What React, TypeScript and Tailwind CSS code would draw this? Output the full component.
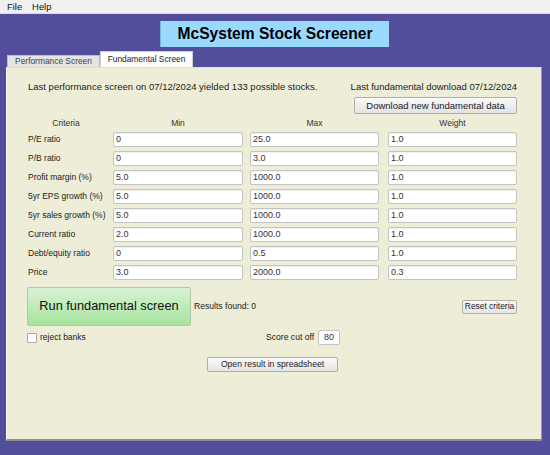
import React from "react";

const rows: [string, string, string, string][] = [
  ["P/E ratio", "0", "25.0", "1.0"],
  ["P/B ratio", "0", "3.0", "1.0"],
  ["Profit margin (%)", "5.0", "1000.0", "1.0"],
  ["5yr EPS growth (%)", "5.0", "1000.0", "1.0"],
  ["5yr sales growth (%)", "5.0", "1000.0", "1.0"],
  ["Current ratio", "2.0", "1000.0", "1.0"],
  ["Debt/equity ratio", "0", "0.5", "1.0"],
  ["Price", "3.0", "2000.0", "0.3"],
];

function Field({ value, className }: { value: string; className: string }) {
  return (
    <div
      className={`h-[15px] flex items-center bg-white border border-[#c3c3c3] rounded-[2px] pl-[2px] text-[9px] leading-none text-[#333] shadow-[inset_0_1px_1px_rgba(0,0,0,0.06)] ${className}`}
    >
      {value}
    </div>
  );
}

export default function App() {
  return (
    <div className="w-[550px] h-[455px] flex flex-col font-['Liberation_Sans',Arial,sans-serif] text-[#222] overflow-hidden">
      {/* menu bar */}
      <div className="h-[14px] bg-[#f0f0f0] border-b border-[#dcdcdc] flex items-center gap-[10px] pl-[7px] text-[9.4px] leading-none text-[#111]">
        <span>File</span>
        <span>Help</span>
      </div>

      <div className="flex-1 bg-[#524e9c] flex flex-col">
        {/* title */}
        <div className="mt-[7px] ml-[160px] w-[229px] h-[26px] bg-[#99d9fe] border-l border-[#7ab4d6] flex items-center justify-center">
          <span className="text-[15.6px] font-bold leading-none text-black">McSystem Stock Screener</span>
        </div>

        {/* tabs */}
        <div className="mt-[4px] ml-[6px] h-[16px] flex items-end">
          <div className="ml-[1px] w-[93px] h-[12px] bg-[#e4e4e4] border border-b-0 border-[#bcbcbc] flex items-center justify-center text-[8.4px] leading-none text-[#444]">
            Performance Screen
          </div>
          <div className="w-[93px] h-[16px] bg-white border border-b-0 border-[#cfcfcf] flex items-center justify-center text-[8.4px] leading-none text-[#222]">
            Fundamental Screen
          </div>
        </div>

        {/* panel */}
        <div className="ml-[6px] w-[536px] h-[374px] bg-[#eeedd7] border-t border-t-[#dedede] border-l border-l-[#f8f8f8] border-r border-r-[#9a9a9a] border-b-2 border-b-[#8d8d8d] pt-[13px] pl-[21px] pr-[24px] flex flex-col">
          <div className="h-[12px] flex items-center justify-between text-[9.5px] leading-none text-[#222]">
            <span>Last performance screen on 07/12/2024 yielded 133 possible stocks.</span>
            <span>Last fundamental download 07/12/2024</span>
          </div>

          <div className="mt-[4px] flex justify-end">
            <div className="w-[163px] h-[17px] bg-gradient-to-b from-[#fafafa] to-[#e3e3e3] border border-[#adadad] rounded-[2px] flex items-center justify-center text-[9.5px] leading-none text-[#222]">
              Download new fundamental data
            </div>
          </div>

          {/* header */}
          <div className="mt-[3px] h-[12px] flex items-center text-[8.5px] leading-none text-[#333]">
            <div className="w-[76px] text-center">Criteria</div>
            <div className="ml-[9px] w-[130px] text-center">Min</div>
            <div className="ml-[7px] w-[129px] text-center">Max</div>
            <div className="ml-[9px] w-[129px] text-center">Weight</div>
          </div>

          <div className="mt-[3px] flex flex-col gap-[4px]">
            {rows.map(([label, min, max, w]) => (
              <div key={label} className="flex items-center h-[15px]">
                <div className="w-[85px] text-[8.5px] leading-none text-[#222]">{label}</div>
                <Field value={min} className="w-[130px]" />
                <Field value={max} className="ml-[7px] w-[129px]" />
                <Field value={w} className="ml-[9px] w-[129px]" />
              </div>
            ))}
          </div>

          {/* run row */}
          <div className="mt-[7px] flex items-center">
            <div className="-ml-px w-[164px] h-[39px] bg-gradient-to-b from-[#d8f2d4] to-[#a6e39d] border border-[#b4c4ae] rounded-[2px] flex items-center justify-center text-[12.8px] leading-none text-[#111]">
              Run fundamental screen
            </div>
            <span className="ml-[3px] text-[8.6px] leading-none text-[#222]">Results found: 0</span>
            <div className="ml-auto w-[55px] h-[14px] bg-gradient-to-b from-[#fafafa] to-[#e6e6e6] border border-[#b0b0b0] rounded-[2px] flex items-center justify-center text-[8.4px] leading-none text-[#222]">
              Reset criteria
            </div>
          </div>

          {/* checkbox row */}
          <div className="mt-[4px] h-[15px] flex items-center">
            <div className="-ml-px w-[239px] flex items-center">
              <div className="w-[10px] h-[10px] bg-white border border-[#a9a9a9] rounded-[1px]" />
              <span className="ml-[3px] text-[8.5px] leading-none text-[#222]">reject banks</span>
            </div>
            <span className="text-[8.6px] leading-none text-[#222]">Score cut off</span>
            <div className="ml-[4px] w-[22px] h-[15px] bg-white border border-[#c3c3c3] rounded-[2px] flex items-center justify-center text-[9px] leading-none text-[#333]">
              80
            </div>
          </div>

          {/* open result */}
          <div className="mt-[12px] flex justify-center">
            <div className="w-[131px] h-[15px] bg-gradient-to-b from-[#fafafa] to-[#e4e4e4] border border-[#adadad] rounded-[2px] flex items-center justify-center text-[8.6px] leading-none text-[#222]">
              Open result in spreadsheet
            </div>
          </div>
        </div>
      </div>
    </div>
  );
}
